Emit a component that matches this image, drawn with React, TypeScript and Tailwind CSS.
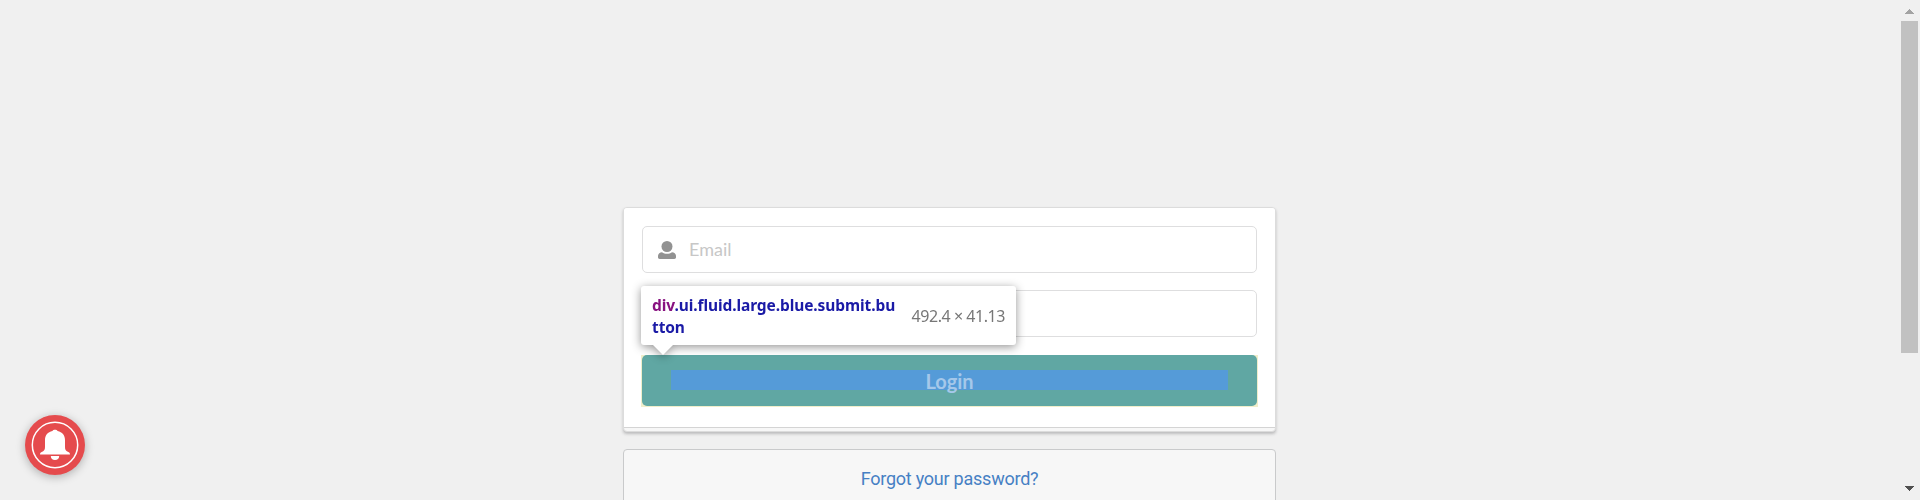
import React from 'react';

function UserIcon() {
  return (
    <svg className="h-[18px] w-[18px]" viewBox="0 0 18 18" fill="#929292">
      <circle cx="9" cy="5.5" r="5.5" />
      <path d="M4 11.2C2 11.2 0 12.7 0 15v1.3C0 17.3.7 18 1.7 18h14.6c1 0 1.7-.7 1.7-1.7V15c0-2.300-2-3.800-4-3.800-1.700 1-3 1.500-5 1.500s-3.300-.5-5-1.500z" />
    </svg>
  );
}

function BellButton() {
  return (
    <button
      aria-label="Notifications"
      className="fixed left-[25px] top-[415px] size-[60px] rounded-full bg-[#e54b4d] shadow-[0_2px_10px_rgba(0,0,0,0.28)]"
    >
      <svg viewBox="0 0 60 60" className="size-[60px]">
        <circle cx="30" cy="30" r="22.700" fill="none" stroke="#fff" strokeWidth="1.500" />
        <path
          fill="#fff"
          d="M30 14.800c-1.200 0-2.200.5-2.600 1.300-4.600.9-7.400 4.400-7.400 8.900v7c0 2.600-.8 3.800-2.800 4.800-1.500.7-2.200 1.400-2.200 2.600h30c0-1.200-.7-1.900-2.200-2.600-2-1-2.800-2.200-2.800-4.800v-7c0-4.500-2.800-8-7.400-8.900-.4-.8-1.400-1.300-2.600-1.300zM25.800 41h8.400c0 2.500-1.700 4-4.200 4s-4.200-1.500-4.200-4z"
        />
      </svg>
    </button>
  );
}

function Scrollbar() {
  return (
    <div className="flex h-full w-[19px] flex-col items-start bg-[#f0f0f0]">
      <svg className="h-[21px] w-[17px]" viewBox="0 0 17 21" shapeRendering="crispEdges">
        <path d="M4 14 8.500 9 13 14z" fill="#a3a3a3" />
      </svg>
      <div className="h-[332px] w-[17px] bg-[#c1c1c1]" />
      <svg className="mt-auto h-[21px] w-[17px]" viewBox="0 0 17 21" shapeRendering="crispEdges">
        <path d="M4 7h9l-4.500 5z" fill="#505050" />
      </svg>
    </div>
  );
}

function InspectorTooltip() {
  return (
    <div className="absolute -top-[69px] left-0 z-10 flex h-[59px] w-[375px] items-center rounded-[3px] bg-white pl-[11px] pr-[11px] font-['Noto_Sans',sans-serif] drop-shadow-[0_2px_5px_rgba(0,0,0,0.42)]">
      <div className="w-[246px] whitespace-nowrap text-[15.500px] font-bold leading-[22px] tracking-[-0.090px] text-[#1a1aa6]">
        <div>
          <span className="text-[#881280]">div</span>.ui.fluid.large.blue.submit.bu
        </div>
        <div>tton</div>
      </div>
      <span className="ml-auto whitespace-nowrap text-[16px] tracking-[-0.450px] text-[#777]">492.4 × 41.13</span>
      <svg className="absolute left-[12px] top-[59px] h-[10px] w-[20px]" viewBox="0 0 20 10">
        <path d="M0 0h20L10 10z" fill="#fff" />
      </svg>
    </div>
  );
}

export default function App() {
  return (
    <div className="flex h-[500px] w-full overflow-hidden bg-[#f0f0f0]">
      <BellButton />
      <main className="flex flex-1 flex-col items-center pl-0 pr-[2px] pt-[207px]">
        <form className="w-[653px] shrink-0 rounded-[4px] border border-[#dcdcdc] bg-[#f7f7f7] pb-[3px] shadow-[0_2px_3px_rgba(34,36,38,0.25)]">
          <div className="rounded-t-[3px] border-b border-[#d4d4d4] bg-white px-[18px] pb-[20px] pt-[18px]">
            <div className="flex h-[47px] items-center gap-[13px] rounded-[5px] border border-[#dededf] bg-white pl-[15px]">
              <UserIcon />
              <span className="font-['Lato',sans-serif] text-[18px] text-[#c7c7c7]">Email</span>
            </div>
            <div className="mt-[17px] h-[47px] rounded-[5px] border border-[#dededf] bg-white" />
            <div className="relative -mx-px mt-[18px] h-[52px] w-[617px] bg-[#f0eecb] px-px pb-px">
              <div className="flex h-[51px] items-start justify-center rounded-[5px] bg-[#60a7a3] pt-[15px]">
                <div className="flex h-[20px] w-[557px] items-center justify-center bg-[#559bd8]">
                  <span className="relative top-[1px] font-['Lato',sans-serif] text-[20px] font-bold leading-[20px] text-[#a5c8ea]">
                    Login
                  </span>
                </div>
              </div>
              <InspectorTooltip />
            </div>
          </div>
        </form>
        <section className="mt-[17px] flex h-[100px] w-[653px] shrink-0 justify-center rounded-[4px] border border-[#c9cacb] bg-[#f7f7f7] pt-[18px]">
          <a className="h-[22px] font-['Roboto',sans-serif] text-[18px] leading-[22px] tracking-[-0.240px] text-[#4680c4]">
            Forgot your password?
          </a>
        </section>
      </main>
      <Scrollbar />
    </div>
  );
}
